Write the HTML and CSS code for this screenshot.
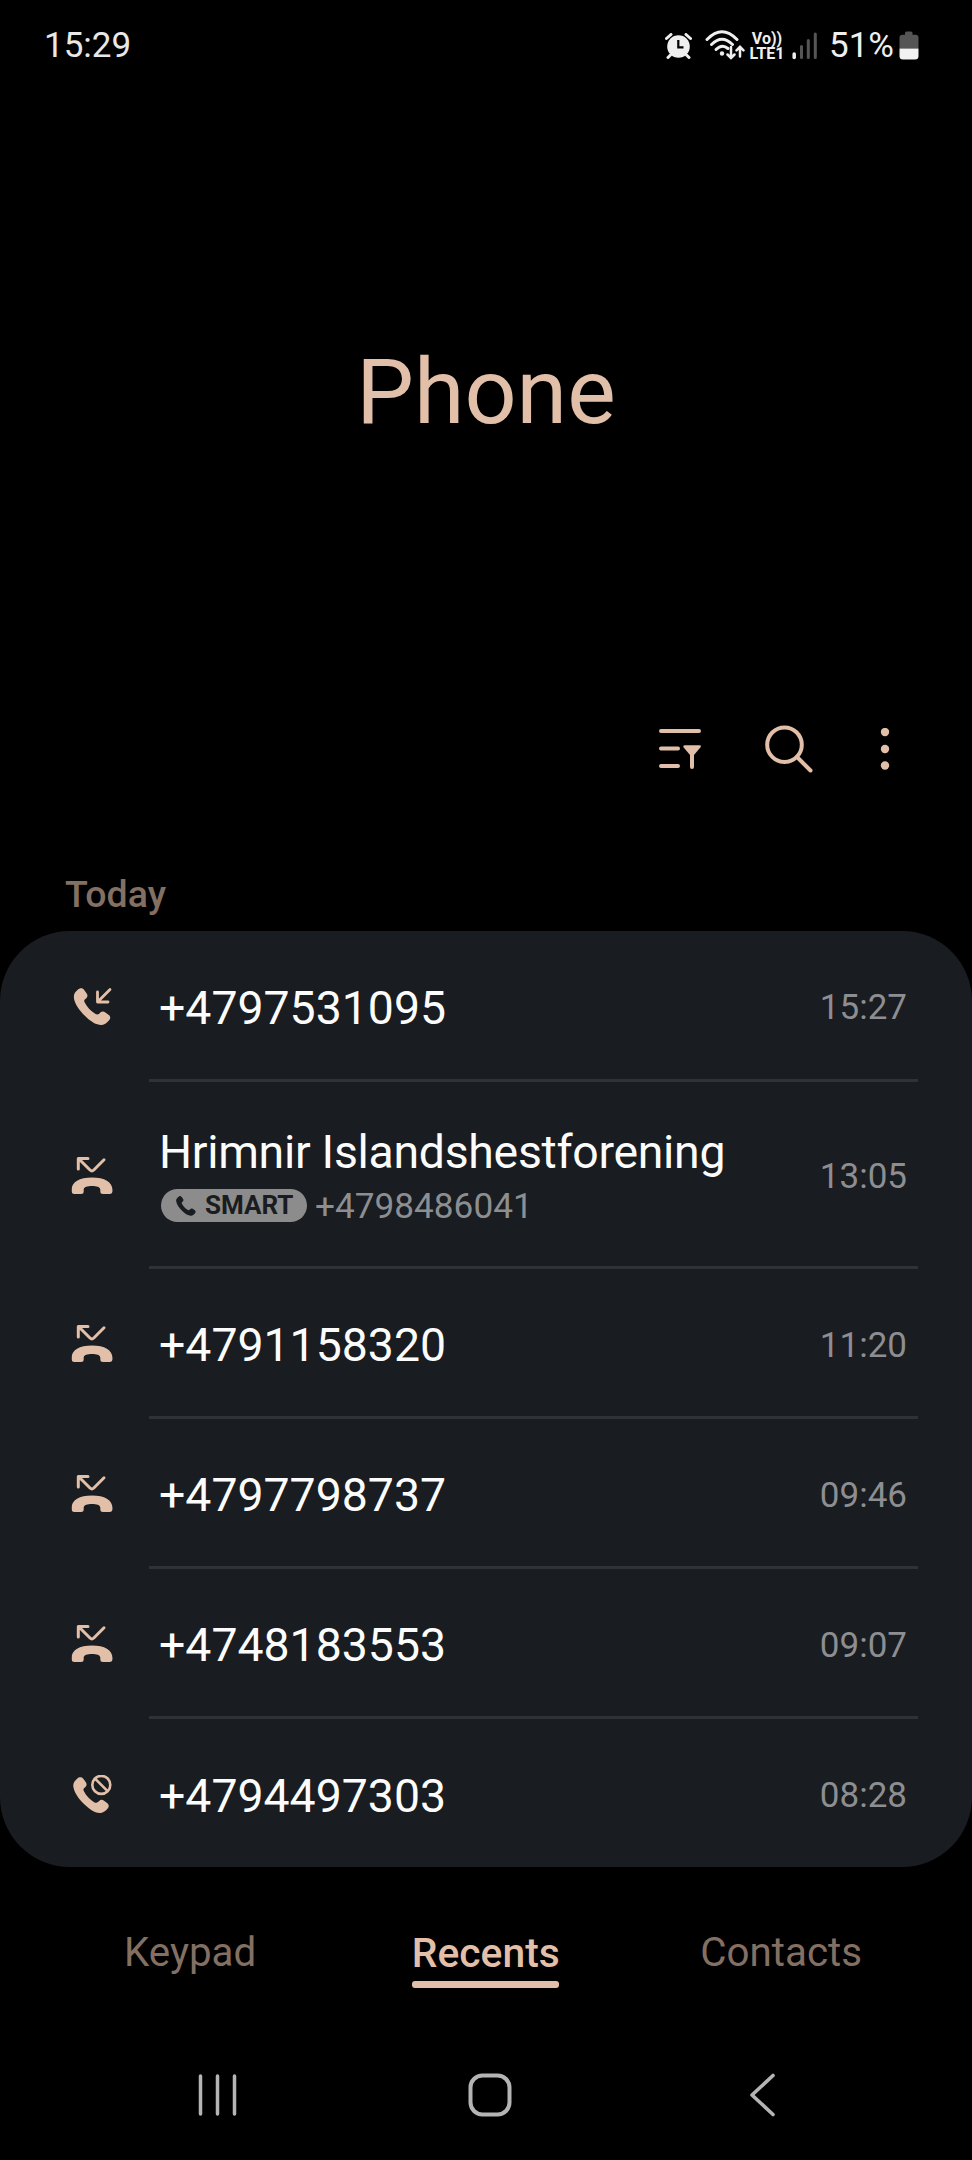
FILE: index.html
```html
<!DOCTYPE html>
<html lang="en">
<head>
<meta charset="utf-8">
<title>Phone</title>
<link rel="stylesheet" href="styles.css">
</head>
<body>
<svg class="defs" width="0" height="0" aria-hidden="true">
  <symbol id="handset" viewBox="0 0 38 38">
    <path d="M4.300 1.800C6.300-.300 9-.200 10.500 1.600L13.200 5.200C14.600 7.200 14.400 9 13 10.300L11.700 11.500C10.500 12.700 10.700 13.800 11.500 15C14 19.500 17.500 23.500 22 26.200C23.500 27.100 24.800 27.200 26 26.100L27.200 24.900C28.700 23.500 30.500 23.400 32.300 24.700L35.800 27.300C37.600 28.800 37.700 31 36.100 32.800C34 35.500 31.500 37.200 28.700 37.500C24 38 18 34.500 12 28.700C5.500 22.200 1 15.500.300 9.500C0 6.300 1.800 3.800 4.300 1.800Z"/>
  </symbol>
  <symbol id="missed" viewBox="0 0 42 38">
    <path fill="none" stroke="currentColor" stroke-width="3" stroke-linecap="round" stroke-linejoin="round" d="M6.800 13V2.500H16.500M7.500 3L18.500 14Q20.400 15.700 22.300 14L32.500 3.800"/>
    <path d="M20.500 21.500C33 21.500 41 25.500 41 34.500Q41 38 38 38H31.500Q28.800 38 28.800 35.500V33.500C28.800 31 25 30 20.500 30S12.200 31 12.200 33.500V35.500Q12.200 38 9.500 38H3Q0 38 0 34.500C0 25.500 8 21.500 20.500 21.500Z"/>
  </symbol>
</svg>

<header class="status">
  <time class="status-time">15:29</time>
  <div class="status-icons">
    <svg class="alarm" viewBox="0 0 27 26">
      <circle cx="13.500" cy="13.500" r="11.300" fill="currentColor"/>
      <path d="M1.500 5.500L6 1.500M21 1.500L25.500 5.500M5.500 22L3 24.500M21.500 22L24 24.500" stroke="currentColor" stroke-width="3" stroke-linecap="round"/>
      <path d="M13.300 7V14.300H18.500" fill="none" stroke="#000" stroke-width="2.200"/>
    </svg>
    <svg class="wifi" viewBox="0 0 40 31">
      <g fill="none" stroke="currentColor" stroke-width="3" stroke-linecap="round">
        <path d="M2 9.500Q17-6 32 9.500"/>
        <path d="M6.500 14.500Q17 4 27.500 14.500"/>
        <path d="M11 19.500Q17 13.500 23 18.500"/>
        <path d="M26 17V27.500M22.500 24.500L26 28L29.500 24.500M35 26.500V17M31.500 20.300L35 16.800L38.500 20.300" stroke-width="2.500"/>
      </g>
      <circle cx="17" cy="23.500" r="2.200" fill="currentColor"/>
    </svg>
    <div class="volte"><span class="volte-top">Vo))</span><span>LTE1</span></div>
    <svg class="signal" viewBox="0 0 26 28">
      <g stroke-width="3" stroke-linecap="round" stroke="#555">
        <path d="M9.500 14.500V25.500M16.300 8.500V25.500M23.300 2V25.500"/>
        <path d="M2.200 22V25.500" stroke="#efefef" stroke-width="3.500"/>
      </g>
    </svg>
    <span class="percent">51%</span>
    <svg class="battery" viewBox="0 0 20 29">
      <path d="M6 3.800V2Q6 .500 7.500 .500H12Q13.500 .500 13.500 2V3.800H16.500Q19.500 3.800 19.500 6.800V17.500H.500V6.800Q.500 3.800 3.500 3.800Z" fill="#555"/>
      <path d="M.500 17.500H19.500V25Q19.500 28.500 16 28.500H4Q.500 28.500 .500 25Z" fill="#f2f2f2"/>
    </svg>
  </div>
</header>

<h1 class="title">Phone</h1>

<nav class="tools">
  <svg class="tool filter" viewBox="0 0 42 42">
    <path d="M2 3H40M2 20.500H19M2 38H19M33 26V39" fill="none" stroke="currentColor" stroke-width="4" stroke-linecap="round"/>
    <path d="M26 17.300H40.500Q43 17.300 41.300 19.500L35 27H31L24.700 19.500Q23.500 17.300 26 17.300Z" fill="currentColor"/>
  </svg>
  <svg class="tool search" viewBox="0 0 48 48">
    <circle cx="19.500" cy="19.700" r="17.300" fill="none" stroke="currentColor" stroke-width="4"/>
    <path d="M32 32L45.500 45.500" stroke="currentColor" stroke-width="4" stroke-linecap="round"/>
  </svg>
  <svg class="tool more" viewBox="0 0 10 42">
    <circle cx="5" cy="4" r="4.200" fill="currentColor"/><circle cx="5" cy="21" r="4.200" fill="currentColor"/><circle cx="5" cy="37.500" r="4.200" fill="currentColor"/>
  </svg>
</nav>

<h2 class="day">Today</h2>
<main class="card">
  <article class="call">
    <svg class="call-icon" viewBox="0 0 42 40"><use href="#handset" x="2.500" y="1" width="37.500" height="37.500"/><path d="M39 2.500L27 14.500M26.500 5V15H37" fill="none" stroke="currentColor" stroke-width="2.800" stroke-linecap="round" stroke-linejoin="round"/></svg>
    <div class="who"><span class="name">+4797531095</span></div><time class="when">15:27</time>
  </article>
  <article class="call tall">
    <svg class="call-icon" viewBox="0 0 42 40"><use href="#missed" x=".500" y="0" width="42" height="38"/></svg>
    <div class="who"><span class="name contact">Hrimnir Islandshestforening</span>
      <div class="detail"><span class="badge"><svg class="badge-icon" viewBox="0 0 38 38"><use href="#handset"/></svg>SMART</span><span>+4798486041</span></div>
    </div><time class="when">13:05</time>
  </article>
  <article class="call">
    <svg class="call-icon" viewBox="0 0 42 40"><use href="#missed" x=".500" y="0" width="42" height="38"/></svg>
    <div class="who"><span class="name">+4791158320</span></div><time class="when">11:20</time>
  </article>
  <article class="call">
    <svg class="call-icon" viewBox="0 0 42 40"><use href="#missed" x=".500" y="0" width="42" height="38"/></svg>
    <div class="who"><span class="name">+4797798737</span></div><time class="when">09:46</time>
  </article>
  <article class="call">
    <svg class="call-icon" viewBox="0 0 42 40"><use href="#missed" x=".500" y="0" width="42" height="38"/></svg>
    <div class="who"><span class="name">+4748183553</span></div><time class="when">09:07</time>
  </article>
  <article class="call">
    <svg class="call-icon" viewBox="0 0 42 40"><use href="#handset" x="2" y="2" width="36.500" height="36.500"/><circle cx="30.300" cy="9.900" r="9" fill="none" stroke="currentColor" stroke-width="2.600"/><path d="M24 3.600L36.600 16.200" stroke="currentColor" stroke-width="2.600"/></svg>
    <div class="who"><span class="name">+4794497303</span></div><time class="when">08:28</time>
  </article>
</main>

<nav class="tabs">
  <a class="tab">Keypad</a>
  <a class="tab active">Recents</a>
  <a class="tab">Contacts</a>
</nav>

<footer class="system">
  <svg viewBox="0 0 44 44"><path d="M5.500 3V41M22.500 3V41M39.500 3V41" stroke="currentColor" stroke-width="3.500" stroke-linecap="round"/></svg>
  <svg viewBox="0 0 44 44"><rect x="2.500" y="2.500" width="39" height="39" rx="12" fill="none" stroke="currentColor" stroke-width="4"/></svg>
  <svg viewBox="0 0 44 44"><path d="M33 2.500L12 22L33 41.500" fill="none" stroke="currentColor" stroke-width="3.600" stroke-linecap="round" stroke-linejoin="round"/></svg>
</footer>
</body>
</html>
```
FILE: styles.css
```css
* { box-sizing: border-box; }
body {
  margin: 0;
  width: 972px;
  height: 2160px;
  background: #000;
  color: #e1bfa8;
  font-family: Roboto, "Liberation Sans", sans-serif;
  display: flex;
  flex-direction: column;
  overflow: hidden;
}
svg { display: block; flex: none; }
.defs { position: absolute; }

.status {
  height: 91px;
  padding: 0 53px 0 44px;
  display: flex;
  justify-content: space-between;
  align-items: center;
  color: #efefef;
  font-size: 35px;
}
.status-time { color: #e8e8e8; }
.status-icons { display: flex; align-items: center; }
.alarm { width: 27px; height: 26px; margin-right: 13px; }
.wifi { width: 40px; height: 31px; margin-right: 4px; }
.volte {
  width: 36px;
  font-size: 16px;
  line-height: 15px;
  font-weight: 700;
  display: flex;
  flex-direction: column;
  align-items: center;
}
.signal { width: 26px; height: 28px; margin: 0 11px 0 7px; }
.percent { margin-right: 5px; }
.battery { width: 20px; height: 29px; }

.title {
  margin: 0;
  height: 599px;
  line-height: 602px;
  text-align: center;
  font-size: 91.5px;
  font-weight: 400;
}

.tools {
  height: 118px;
  padding: 0 82px;
  display: flex;
  justify-content: flex-end;
  align-items: center;
}
.filter { width: 42px; height: 42px; margin-right: 64px; }
.search { width: 48px; height: 48px; margin-right: 67px; }
.more { width: 10px; height: 42px; }

.day {
  margin: 0;
  height: 123px;
  padding: 62px 0 0 65px;
  font-size: 37.5px;
  line-height: 48px;
  font-weight: 500;
  color: #837063;
}

.card {
  height: 936px;
  border-radius: 70px;
  background: #191c20;
  padding: 0 54px 0 71px;
}
.call {
  height: 150px;
  display: grid;
  grid-template-columns: 42px 1fr auto;
  align-items: center;
}
.call:first-child, .call:last-child { height: 151px; }
.call-icon { width: 42px; height: 40px; fill: currentColor; }
.who {
  height: 100%;
  margin-left: 36px;
  padding: 5px 0 0 10px;
  display: flex;
  flex-direction: column;
  justify-content: center;
  border-bottom: 3px solid #303236;
  color: #fcfcfc;
}
.name { font-size: 46.4px; line-height: 54px; white-space: nowrap; }
.contact { letter-spacing: -0.29px; }
.when {
  height: 100%;
  padding: 5px 11px 0 0;
  display: flex;
  align-items: center;
  border-bottom: 3px solid #303236;
  font-size: 35px;
  color: #8d8e91;
}
.tall { height: 187px; }
.tall .who { padding-top: 8px; }
.call:last-child .who, .call:last-child .when { border-color: transparent; }
.detail {
  margin-top: 1px;
  display: flex;
  align-items: center;
  gap: 7px;
  font-size: 35.2px;
  line-height: 52px;
  color: #8d8e91;
}
.badge {
  width: 146px;
  height: 33px;
  margin-left: 2px;
  padding-left: 15px;
  display: flex;
  align-items: center;
  gap: 9px;
  border-radius: 17px;
  background: #8c8c8c;
  color: #191c20;
  font-size: 26px;
  line-height: 33px;
  font-weight: 700;
}
.detail > span:last-child { margin-left: 1px; }
.badge-icon { width: 20px; height: 20px; fill: currentColor; }

.tabs {
  height: 206px;
  padding: 62px 110px 0 124px;
  display: flex;
  align-items: flex-start;
  justify-content: space-between;
  font-size: 40.3px;
  line-height: 48px;
  color: #837063;
}
.active {
  width: 147px;
  margin-left: 14px;
  text-align: center;
  color: #e1bfa8;
  font-weight: 500;
  font-size: 40.8px;
}
.active::after {
  content: "";
  display: block;
  height: 7px;
  margin-top: 4px;
  border-radius: 3px;
  background: #e1bfa8;
}

.system {
  padding: 0 188px 0 195px;
  display: flex;
  justify-content: space-between;
  color: #b4b4b4;
}
.system svg { width: 44px; height: 44px; }
```
